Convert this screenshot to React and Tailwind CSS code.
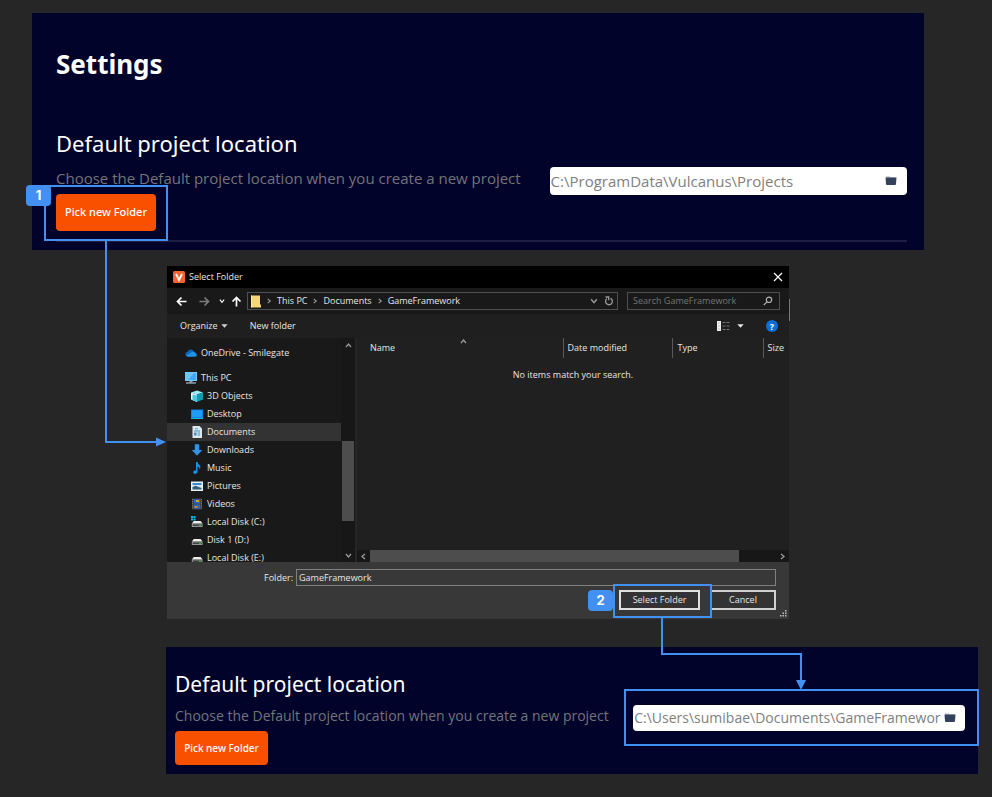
import React from "react";

const uiFont = "font-['Open_Sans','Noto_Sans',sans-serif]";

/* ---------- annotations ---------- */

function StepBadge({ number, className }) {
  return (
    <span
      className={`absolute flex h-[21px] w-[25px] items-center justify-center rounded-[4px] bg-[#4390f3] font-['Inter',sans-serif] text-[13px] font-bold leading-none text-white ${className}`}
    >
      {number}
    </span>
  );
}

function Outline({ className }) {
  return <span aria-hidden="true" className={`pointer-events-none absolute border-2 border-[#4390f3] ${className}`} />;
}

/* ---------- settings panels ---------- */

function FolderIcon() {
  return (
    <svg width="12" height="11" viewBox="0 0 12 11" aria-hidden="true">
      <path d="M1 3V1.200h3.600l1 1H10V4H1z" fill="#c3c9d0" />
      <path d="M.5 2.500h11l-.5 6.500q-.1.900-1 .9H2q-.9 0-1-.9z" fill="#33415a" />
    </svg>
  );
}

function PathField({ id, value, className, inputClassName }) {
  return (
    <div className={`flex items-center rounded-[4px] bg-white ${className}`}>
      <input
        id={id}
        readOnly
        defaultValue={value}
        className={`h-full min-w-0 flex-1 bg-transparent pl-px text-[#808080] outline-none ${inputClassName}`}
      />
      <button type="button" aria-label="Browse" className="shrink-0">
        <FolderIcon />
      </button>
    </div>
  );
}

function SettingsPanel() {
  return (
    <section className="ml-[32px] mr-[68px] bg-[#01032a] pb-2 pl-6 pr-[17px] pt-8">
      <h1 className="font-['Noto_Sans',sans-serif] text-[26px] font-bold leading-[38px] text-white">Settings</h1>
      <div className="mt-11 flex items-center justify-between border-b-2 border-[#1c1e42] pb-[9px]">
        <div>
          <h2 className="font-['Noto_Sans',sans-serif] text-[22px] leading-8 text-white">
            <label htmlFor="location-before">Default project location</label>
          </h2>
          <p className="mt-[7px] text-[15px] leading-6 text-[#74747a]">
            Choose the Default project location when you create a new project
          </p>
          <div className="relative z-10 mt-[4px] w-[100px]">
            <button
              type="button"
              className="h-[37px] w-full rounded-[4px] bg-[#f95000] font-['Noto_Sans',sans-serif] text-[11px] font-medium text-white"
            >
              Pick new Folder
            </button>
            <Outline className="-bottom-[10px] -left-3 -right-3 -top-[9px]" />
            <StepBadge number="1" className="-left-[30px] -top-[9px]" />
            <svg
              className="pointer-events-none absolute left-[48px] top-[47px]"
              width="64"
              height="208"
              viewBox="0 0 64 208"
              aria-hidden="true"
            >
              <path d="M2 0V201H54" fill="none" stroke="#4390f3" strokeWidth="2" />
              <path d="M52 196.500v9l10-4.500z" fill="#4390f3" />
            </svg>
          </div>
        </div>
        <PathField
          id="location-before"
          value="C:\ProgramData\Vulcanus\Projects"
          className="mt-[3px] h-7 w-[42%] pr-[10px]"
          inputClassName="text-[15px]"
        />
      </div>
    </section>
  );
}

function ResultPanel() {
  return (
    <section className="ml-[166px] mr-[14px] mt-7 flex items-center justify-between bg-[#01032a] pb-[9px] pl-[9px] pr-[13px] pt-[21px]">
      <div>
        <h2 className="font-['Noto_Sans',sans-serif] text-[21px] leading-8 text-white">
          <label htmlFor="location-after">Default project location</label>
        </h2>
        <p className="mt-[4px] text-[14px] leading-6 text-[#74747a]">
          Choose the Default project location when you create a new project
        </p>
        <button
          type="button"
          className="mt-[3px] h-[34px] w-[93px] rounded-[4px] bg-[#f95000] font-['Noto_Sans',sans-serif] text-[10px] font-medium text-white"
        >
          Pick new Folder
        </button>
      </div>
      <div className="relative mt-[2px] w-[42%]">
        <PathField
          id="location-after"
          value="C:\Users\sumibae\Documents\GameFramewor"
          className="h-[26px] w-full pr-[9px]"
          inputClassName="text-[14px]"
        />
        <Outline className="-bottom-[15px] -left-[9px] -right-[14px] -top-4" />
      </div>
    </section>
  );
}

/* ---------- folder dialog icons ---------- */

function Icon({ w = 12, h = 12, children }) {
  return (
    <svg width={w} height={h} viewBox={`0 0 ${w} ${h}`} className="shrink-0" aria-hidden="true">
      {children}
    </svg>
  );
}

const OneDriveIcon = () => (
  <Icon>
    <path d="M1 8.500Q0 7.500.4 6.200 1 4.800 2.600 4.700 3.500 2.500 5.800 2.500 7.800 2.500 8.800 4.500L6 9.500H3z" fill="#0a64b8" />
    <path d="M3 9.800Q1.500 9.700 1 8.600L6 5.400Q7 4.500 8.600 4.500q1.500.2 1.900 1.600 1.400.3 1.400 1.900-.1 1.700-1.900 1.800z" fill="#1d91e6" />
  </Icon>
);
const PcIcon = () => (
  <Icon>
    <rect x="0" y="0" width="12" height="9" fill="#8fd6fb" />
    <rect x=".7" y=".7" width="10.600" height="7.600" fill="#42a8f2" />
    <path d="M.7.700h8.500L3 8.300H.7z" fill="#6cc3f8" />
    <path d="M4.500 9h3v1.200H11v1.500H1v-1.500h3.500z" fill="#8a99a5" />
  </Icon>
);
const CubeIcon = () => (
  <Icon>
    <path d="M0 2.500 6 .5l6 2L6 4.500z" fill="#9eeef5" />
    <path d="M0 2.500l6 2V12L0 9.500z" fill="#dff8fa" />
    <path d="M1.500 4.500 6 5.500V12L1.500 10z" fill="#4cc9d9" />
    <path d="M6 4.500l6-2v7L6 12z" fill="#1399b3" />
  </Icon>
);
const DesktopIcon = () => (
  <Icon>
    <rect y="1.500" width="12" height="9.500" fill="#0a7fe0" />
    <rect x=".8" y="2.300" width="10.400" height="7" fill="#1e9cf8" />
    <rect y="10" width="12" height="1" fill="#0bd" />
  </Icon>
);
const DocumentIcon = () => (
  <Icon>
    <path d="M1.500 0h7l2.500 2.500V12H1.500z" fill="#dfe7ec" />
    <path d="M3 4.500h6v1H3zM3 6.500h2.500v3H3zM6.500 6.500H9v1H6.500zM6.500 8.500H9v1H6.500z" fill="#3a93c9" />
    <path d="M4 2h3v1.500H4z" fill="#79b5d8" />
  </Icon>
);
const DownloadIcon = () => (
  <Icon>
    <path d="M3.800.300h4.400V6h3L6 11.800.8 6h3z" fill="#2f93e8" />
  </Icon>
);
const MusicIcon = () => (
  <Icon>
    <path d="M5 0h1.500Q7 2.300 8.600 3.300 10.200 4.700 8.600 7.500 8.800 5 6.500 4.300V9.800Q6.200 11.800 4 11.900 2 11.700 2.100 10 2.600 8.200 5 8.300z" fill="#1296ea" />
  </Icon>
);
const PictureIcon = () => (
  <Icon>
    <rect y="1.500" width="12" height="9.500" fill="#e8eef2" />
    <rect x="1.500" y="3" width="9" height="6.500" fill="#d3e6f2" />
    <path d="M1.500 3h9v2h-9z" fill="#3a8ccc" />
    <path d="M1.500 7l3-1.200L10.500 8v1.500h-9z" fill="#315f78" />
  </Icon>
);
const VideoIcon = () => (
  <Icon>
    <rect x="1" y=".5" width="10" height="11" fill="#444444" />
    <path d="M1.500 1v10M10.500 1v10" stroke="#777" strokeDasharray="1 1" />
    <rect x="3" y="1.300" width="6" height="4.200" fill="#2c68c4" />
    <rect x="5" y="2" width="3" height="2" fill="#d79b2f" />
    <rect x="3" y="6.500" width="6" height="4.200" fill="#2c68c4" />
    <rect x="3.500" y="8" width="3" height="2" fill="#c7833a" />
  </Icon>
);
const DriveIcon = ({ system }) => (
  <Icon>
    {system && <path d="M0 0h2v2H0zM2.500 0h2v2h-2zM0 2.500h2v2H0zM2.500 2.500h2v2h-2z" fill="#17b5ea" />}
    <path d="M2.800 5h6.800L11.500 7.500H.8z" fill="#ededed" />
    <path d="M.8 7.500h10.700V11H.8z" fill="#a9a9a9" />
    <path d="M1.600 8.300h9.100v1.900H1.600z" fill="#444" />
    <path d="M8 8.800h2v1H8z" fill="#3ec04b" />
  </Icon>
);

function Chevron({ d, size = 7, color = "#9a9a9a" }) {
  const paths = {
    up: "M1 5 3.500 2 6 5",
    down: "M1 2 3.500 5 6 2",
    left: "M5 1 2 3.500 5 6",
    right: "M2 1 5 3.500 2 6",
  };
  return (
    <svg width={size} height={size} viewBox="0 0 7 7" fill="none" stroke={color} strokeWidth="1.300" className="shrink-0" aria-hidden="true">
      <path d={paths[d]} />
    </svg>
  );
}

function NavArrow({ direction, color }) {
  const paths = {
    back: "M10.500 5.500H1.500M5.500 1.500l-4 4 4 4",
    forward: "M.5 5.500h9M5.500 1.500l4 4-4 4",
    up: "M5.500 10.500v-9M1.500 5.500l4-4 4 4",
  };
  return (
    <svg width="11" height="11" viewBox="0 0 11 11" fill="none" stroke={color} strokeWidth="1.700" aria-hidden="true">
      <path d={paths[direction]} />
    </svg>
  );
}

/* ---------- folder dialog ---------- */

const places = [
  { label: "3D Objects", icon: <CubeIcon /> },
  { label: "Desktop", icon: <DesktopIcon /> },
  { label: "Documents", icon: <DocumentIcon />, active: true },
  { label: "Downloads", icon: <DownloadIcon /> },
  { label: "Music", icon: <MusicIcon /> },
  { label: "Pictures", icon: <PictureIcon /> },
  { label: "Videos", icon: <VideoIcon /> },
  { label: "Local Disk (C:)", icon: <DriveIcon system /> },
  { label: "Disk 1 (D:)", icon: <DriveIcon /> },
  { label: "Local Disk (E:)", icon: <DriveIcon /> },
];

function TreeItem({ icon, label, active, root }) {
  return (
    <button
      type="button"
      className={`flex h-[18px] w-full shrink-0 items-center gap-1 whitespace-nowrap text-left ${root ? "pl-[18px]" : "pl-6"} ${
        active ? "bg-[#333333]" : ""
      }`}
    >
      {icon}
      {label}
    </button>
  );
}

function Crumb({ children }) {
  return (
    <>
      <span className="flex w-4 justify-center">
        <Chevron d="right" size={6} />
      </span>
      <a href="#crumb" className="whitespace-nowrap">
        {children}
      </a>
    </>
  );
}

function FolderDialog() {
  return (
    <section
      aria-label="Select Folder"
      className="relative ml-[167px] mr-[203px] mt-4 bg-[#202020] text-[9px] leading-3 text-[#e6e6e6]"
    >
      <span aria-hidden="true" className="absolute -right-px top-[33px] h-[22px] w-px bg-[#777777]" />

      <header className="flex h-[22px] items-center bg-black pl-[6px] pr-[6px]">
        <svg width="12" height="12" viewBox="0 0 12 12" aria-hidden="true">
          <rect width="12" height="12" rx="1.500" fill="#f0642d" />
          <path d="M3 3l3 6 3-6" fill="none" stroke="#fff" strokeWidth="1.800" />
        </svg>
        <h2 className="ml-1 flex-1">Select Folder</h2>
        <button type="button" aria-label="Close">
          <svg width="10" height="10" viewBox="0 0 10 10" stroke="#fff" strokeWidth="1.200" aria-hidden="true">
            <path d="M1 1l8 8M9 1L1 9" />
          </svg>
        </button>
      </header>

      <div className="flex h-[26px] items-center bg-[#191919] pl-[9px] pr-[9px]">
        <button type="button" aria-label="Back">
          <NavArrow direction="back" color="#ffffff" />
        </button>
        <button type="button" aria-label="Forward" className="ml-3">
          <NavArrow direction="forward" color="#7d7d7d" />
        </button>
        <button type="button" aria-label="Recent locations" className="ml-[9px]">
          <Chevron d="down" size={6} color="#ffffff" />
        </button>
        <button type="button" aria-label="Up" className="ml-[6px]">
          <NavArrow direction="up" color="#ffffff" />
        </button>
        <div className="ml-[5px] flex h-[18px] flex-1 items-center border border-[#4f4f4f] pl-[3px] pr-[3px]">
          <svg width="10" height="13" viewBox="0 0 10 13" aria-hidden="true">
            <path d="M0 .5h9V9l1 1v2.500H0z" fill="#f5d778" />
            <path d="M0 .5h1v12H0z" fill="#ffe9a0" />
          </svg>
          <nav aria-label="Address" className="flex flex-1 items-center">
            <Crumb>This PC</Crumb>
            <Crumb>Documents</Crumb>
            <Crumb>GameFramework</Crumb>
          </nav>
          <button type="button" aria-label="Previous locations">
            <Chevron d="down" size={8} />
          </button>
          <button type="button" aria-label="Refresh" className="ml-[6px]">
            <svg width="10" height="10" viewBox="0 0 10 10" fill="none" stroke="#9a9a9a" strokeWidth="1.300" aria-hidden="true">
              <path d="M6.500 2.300A3.400 3.400 0 1 1 2.800 2.700M1.500 1h3.200v3.200" />
            </svg>
          </button>
        </div>
        <div className="ml-[9px] flex h-[18px] w-[153px] items-center border border-[#4f4f4f] pl-[5px] pr-[6px]">
          <input
            aria-label="Search GameFramework"
            placeholder="Search GameFramework"
            className="min-w-0 flex-1 bg-transparent outline-none placeholder:text-[#757575]"
          />
          <svg width="10" height="10" viewBox="0 0 10 10" fill="none" stroke="#b0b0b0" strokeWidth="1.200" aria-hidden="true">
            <circle cx="6" cy="3.800" r="2.700" />
            <path d="M4 5.800.8 9" />
          </svg>
        </div>
      </div>

      <div className="flex h-6 items-center bg-[#1f1f1f] pl-[13px] pr-[11px]">
        <button type="button" className="flex items-center gap-[3px]">
          Organize
          <svg width="7" height="4" viewBox="0 0 7 4" aria-hidden="true">
            <path d="M.3.300h6.400L3.500 3.700z" fill="#d0d0d0" />
          </svg>
        </button>
        <button type="button" className="ml-[22px]">
          New folder
        </button>
        <button type="button" aria-label="Change view" className="ml-auto flex items-center gap-[7px]">
          <svg width="13" height="10" viewBox="0 0 13 10" aria-hidden="true">
            <rect width="4" height="10" fill="#eeeeee" />
            <path d="M1 2h2M1 5h2M1 8h2" stroke="#bbb" strokeWidth=".8" />
            <path d="M5.500 1.500h3M9.500 1.500h3M5.500 5h3M9.500 5h3M5.500 8.500h3M9.500 8.500h3" stroke="#777" />
          </svg>
          <svg width="7" height="4" viewBox="0 0 7 4" aria-hidden="true">
            <path d="M.3.300h6.400L3.500 3.700z" fill="#e6e6e6" />
          </svg>
        </button>
        <button
          type="button"
          aria-label="Help"
          className="ml-[22px] flex size-3 items-center justify-center rounded-full bg-[#0a6fd6] text-[9px] font-bold leading-none text-white"
        >
          ?
        </button>
      </div>

      <div className="flex h-[224px]">
        <div className="flex w-[190px] shrink-0 border-r-2 border-[#262626] bg-[#191919]">
          <div className="flex flex-1 flex-col overflow-hidden pt-[6px]">
            <TreeItem root icon={<OneDriveIcon />} label="OneDrive - Smilegate" />
            <div className="h-[7px] shrink-0" />
            <TreeItem root icon={<PcIcon />} label="This PC" />
            {places.map((place) => (
              <TreeItem key={place.label} {...place} />
            ))}
          </div>
          <div className="flex w-[14px] flex-col items-center bg-[#171717] pb-[3px] pt-1">
            <Chevron d="up" />
            <div className="mt-[92px] h-20 w-3 bg-[#4d4d4d]" />
            <div className="flex-1" />
            <Chevron d="down" />
          </div>
        </div>

        <div className="flex min-w-0 flex-1 flex-col">
          <table className="w-full table-fixed border-collapse text-left">
            <colgroup>
              <col />
              <col className="w-[109px]" />
              <col className="w-[91px]" />
              <col className="w-[26px]" />
            </colgroup>
            <thead>
              <tr className="h-5">
                <th className="relative p-0 pl-[13px] font-normal">
                  Name
                  <span className="absolute left-1/2 top-0">
                    <Chevron d="up" />
                  </span>
                </th>
                <th className="border-l border-[#5a5a5a] p-0 pl-1 font-normal">Date modified</th>
                <th className="border-l border-[#5a5a5a] p-0 pl-[5px] font-normal">Type</th>
                <th className="border-l border-[#5a5a5a] p-0 pl-1 font-normal">Size</th>
              </tr>
            </thead>
            <tbody>
              <tr>
                <td colSpan={4} className="p-0 pt-[11px] text-center">
                  No items match your search.
                </td>
              </tr>
            </tbody>
          </table>
          <div className="mt-auto flex h-3 items-center bg-[#171717] pl-[3px] pr-[3px]">
            <Chevron d="left" />
            <div className="ml-[3px] mr-[40px] h-full flex-1 bg-[#4d4d4d]" />
            <Chevron d="right" />
          </div>
        </div>
      </div>

      <footer className="relative bg-[#383838] pb-[9px] pr-[13px] pt-[7px]">
        <div className="flex items-center">
          <label htmlFor="folder-name" className="w-[126px] shrink-0 text-right">
            Folder:
          </label>
          <input
            id="folder-name"
            defaultValue="GameFramework"
            className="ml-[3px] h-[17px] min-w-0 flex-1 border border-[#808080] bg-[#383838] pl-[2px] outline-none"
          />
        </div>
        <div className="mt-1 flex justify-end gap-[10px]">
          <div className="relative z-10 w-[81px]">
            <button type="button" className="h-5 w-full border-2 border-[#e0e0e0] bg-[#333333]">
              Select Folder
            </button>
            <Outline className="-bottom-2 -left-[6px] -right-3 -top-[6px]" />
            <StepBadge number="2" className="-left-[31px] top-0" />
            <svg
              className="pointer-events-none absolute left-[40px] top-7"
              width="150"
              height="73"
              viewBox="0 0 150 73"
              aria-hidden="true"
            >
              <path d="M3 0V36H142V64" fill="none" stroke="#4390f3" strokeWidth="2" />
              <path d="M137 62h10L142 72z" fill="#4390f3" />
            </svg>
          </div>
          <button type="button" className="h-5 w-[66px] border-2 border-[#d0d0d0] bg-[#333333]">
            Cancel
          </button>
        </div>
        <svg className="absolute bottom-[2px] right-[2px]" width="7" height="7" viewBox="0 0 7 7" fill="#bdbdbd" aria-hidden="true">
          <path d="M5 0h1.500v1.500H5zM2.500 2.500H4V4H2.500zM5 2.500h1.500V4H5zM0 5h1.500v1.500H0zM2.500 5H4v1.500H2.500zM5 5h1.500v1.500H5z" />
        </svg>
      </footer>
    </section>
  );
}

export default function App() {
  return (
    <main className={`min-h-screen bg-[#262626] pb-[23px] pt-[13px] ${uiFont}`}>
      <SettingsPanel />
      <FolderDialog />
      <ResultPanel />
    </main>
  );
}
